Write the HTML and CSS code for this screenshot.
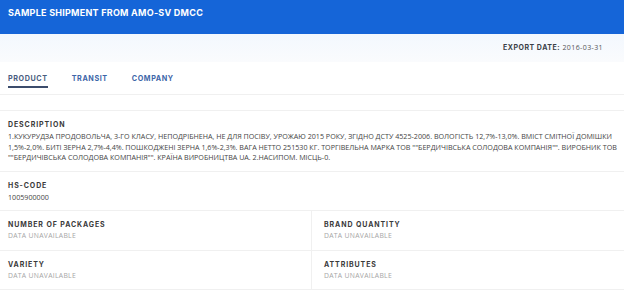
FILE: index.html
```html
<!DOCTYPE html>
<html lang="en">
<head>
    <meta charset="UTF-8">
    <meta name="viewport" content="width=device-width, initial-scale=1.0">
    <title>Sample shipment</title>
    <link rel="stylesheet" href="styles.css">
</head>
<body>
    <header class="top">
        <h1>Sample shipment from AMO-SV DMCC</h1>
    </header>
    <div class="meta">
        <span class="meta-label">Export date:</span> <span class="meta-value">2016-03-31</span>
    </div>
    <nav class="tabs">
        <a class="tab active">Product</a>
        <a class="tab">Transit</a>
        <a class="tab">Company</a>
    </nav>

    <div class="card">
        <div class="field">
            <div class="label">Description</div>
            <div class="value">1.КУКУРУДЗА ПРОДОВОЛЬЧА, 3-ГО КЛАСУ, НЕПОДРІБНЕНА, НЕ ДЛЯ ПОСІВУ, УРОЖАЮ 2015 РОКУ, ЗГІДНО ДСТУ 4525-2006. ВОЛОГІСТЬ 12,7%-13,0%. ВМІСТ СМІТНОЇ ДОМІШКИ 1,5%-2,0%. БИТІ ЗЕРНА 2,7%-4,4%. ПОШКОДЖЕНІ ЗЕРНА 1,6%-2,3%. ВАГА НЕТТО 251530 КГ. ТОРГІВЕЛЬНА МАРКА ТОВ ""БЕРДИЧІВСЬКА СОЛОДОВА КОМПАНІЯ"". ВИРОБНИК ТОВ ""БЕРДИЧІВСЬКА СОЛОДОВА КОМПАНІЯ"". КРАЇНА ВИРОБНИЦТВА UA. 2.НАСИПОМ. МІСЦЬ-0.</div>
        </div>
        <div class="field">
            <div class="label">HS-Code</div>
            <div class="value">1005900000</div>
        </div>
        <div class="pair">
            <div class="field">
                <div class="label">Number of packages</div>
                <div class="value empty">Data unavailable</div>
            </div>
            <div class="field">
                <div class="label">Brand quantity</div>
                <div class="value empty">Data unavailable</div>
            </div>
        </div>
        <div class="pair">
            <div class="field">
                <div class="label">Variety</div>
                <div class="value empty">Data unavailable</div>
            </div>
            <div class="field">
                <div class="label">Attributes</div>
                <div class="value empty">Data unavailable</div>
            </div>
        </div>
    </div>
</body>
</html>
```

FILE: styles.css
```css
* {
    margin: 0;
    padding: 0;
    box-sizing: border-box;
}

body {
    font-family: Inter, "Open Sans", sans-serif;
    background: #fff;
    color: #333;
    width: 624px;
    overflow: hidden;
}

.top {
    background-color: #1565d8;
    height: 34px;
    padding: 7px 8px 0;
}

.top h1 {
    color: #fff;
    font-size: 9px;
    font-weight: 700;
    letter-spacing: 0.25px;
    text-transform: uppercase;
    line-height: 12px;
}

.meta {
    background: linear-gradient(#f3f8fe, #fafbfd);
    height: 28px;
    padding: 9px 21px 0 0;
    text-align: right;
    font-size: 7px;
    letter-spacing: 0.5px;
    line-height: 10px;
}

.meta-label {
    font-weight: 700;
    text-transform: uppercase;
    color: #3a3f47;
}

.meta-value {
    color: #555;
    font-family: "Open Sans", sans-serif;
    letter-spacing: 0.4px;
}

.tabs {
    display: flex;
    gap: 24px;
    padding: 12px 8px 0;
    height: 33px;
    border-bottom: 1px solid #f0f0f0;
}

.tab {
    font-size: 7.2px;
    font-weight: 700;
    letter-spacing: 0.6px;
    text-transform: uppercase;
    color: #3d65a8;
    line-height: 10px;
    height: 14px;
}

.tab.active {
    color: #4a5d80;
    border-bottom: 2px solid #3c4c6c;
}

.card {
    margin-top: 15px;
    border-top: 1px solid #f0f0f0;
}

.field {
    padding: 8px 8px 8px;
    border-bottom: 1px solid #f0f0f0;
}

.card > .field {
    padding-right: 4px;
}

.pair {
    display: grid;
    grid-template-columns: 311px 1fr;
}

.pair .field + .field {
    border-left: 1px solid #f0f0f0;
    padding-left: 12px;
}

.label {
    font-size: 7px;
    font-weight: 700;
    letter-spacing: 0.9px;
    text-transform: uppercase;
    color: #3a3a3a;
    line-height: 11px;
}

.value {
    font-family: "Open Sans", sans-serif;
    font-size: 7.15px;
    color: #444;
    line-height: 10.5px;
    margin-top: 1px;
}

.value.empty {
    font-size: 6.8px;
    text-transform: uppercase;
    color: #a6a6a6;
    letter-spacing: 0.3px;
}
```
